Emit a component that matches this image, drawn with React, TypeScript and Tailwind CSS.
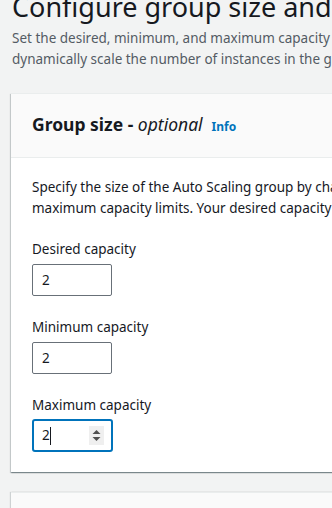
import React from "react";

function Field({ label, mt }: { label: string; mt: string }) {
  return (
    <div className={mt}>
      <div className="text-[13.5px] leading-[20px] text-[#16191f]">{label}</div>
      <div className="mt-[5px] w-[80px] h-[32px] border border-[#687078] rounded-[2px] bg-white flex items-center pl-[9px] text-[13.5px] text-[#16191f]">
        2
      </div>
    </div>
  );
}

export default function App() {
  return (
    <div
      className="w-[332px] h-[508px] overflow-hidden bg-[#f2f3f3] text-[#16191f]"
      style={{ fontFamily: '"Noto Sans", "Open Sans", sans-serif' }}
    >
      <div className="w-[760px]">
        <div className="pl-[12px]">
          <h1 className="mt-[-11px] text-[27px] leading-[36px] font-normal text-[#16191f] whitespace-nowrap">
            Configure group size and scaling policies
          </h1>
          <p className="mt-[3px] text-[13.5px] leading-[21px] text-[#545b64] whitespace-nowrap">
            Set the desired, minimum, and maximum capacity of your Auto Scaling group. You can optionally add automatic scaling policies to
            <br />
            dynamically scale the number of instances in the group.
          </p>
        </div>

        <div className="ml-[11px] mt-[23px] bg-white shadow-[0_1px_1px_0_rgba(0,28,36,0.3),1px_1px_1px_0_rgba(0,28,36,0.15),-1px_1px_1px_0_rgba(0,28,36,0.15)] border-t border-[#eaeded]">
          <div className="bg-[#fafafa] border-b border-[#eaeded] pl-[21px] pt-[18px] pb-[21px]">
            <div className="flex items-baseline whitespace-nowrap">
              <span className="text-[17.5px] leading-[24px] font-bold text-[#16191f]">
                Group size - <i className="font-normal">optional</i>
              </span>
              <span className="ml-[9px] text-[12px] font-bold text-[#0073bb]">Info</span>
            </div>
          </div>
          <div className="pl-[21px] pt-[19px] pb-[20px]">
            <p className="text-[13.5px] leading-[21px] text-[#16191f] whitespace-nowrap">
              Specify the size of the Auto Scaling group by changing the desired capacity. You can also specify minimum and
              <br />
              maximum capacity limits. Your desired capacity must be within the limit range.
            </p>
            <Field label="Desired capacity" mt="mt-[20px]" />
            <Field label="Minimum capacity" mt="mt-[21px]" />
            <div className="mt-[21px]">
              <div className="text-[13.5px] leading-[20px] text-[#16191f]">Maximum capacity</div>
              <div className="mt-[4px] w-[81px] h-[33px] border-2 border-[#0073bb] rounded-[3px] bg-white flex items-center pl-[8px] pr-[7px] text-[13.5px] text-[#16191f]">
                <span>2</span>
                <span className="w-px h-[18px] bg-[#16191f]" />
                <span className="ml-auto w-[15px] h-[19px] bg-[#efefef] flex items-center justify-center">
                  <svg width="9" height="13" viewBox="0 0 9 13">
                    <polygon points="4.5,1 8.5,5 0.5,5" fill="#505050" />
                    <polygon points="0.5,8 8.5,8 4.5,12" fill="#505050" />
                  </svg>
                </span>
              </div>
            </div>
          </div>
        </div>

        <div className="ml-[11px] mt-[20px] h-[40px] bg-[#fafafa] border-t border-[#eaeded] shadow-[1px_0_1px_0_rgba(0,28,36,0.15),-1px_0_1px_0_rgba(0,28,36,0.15)]" />
      </div>
    </div>
  );
}
